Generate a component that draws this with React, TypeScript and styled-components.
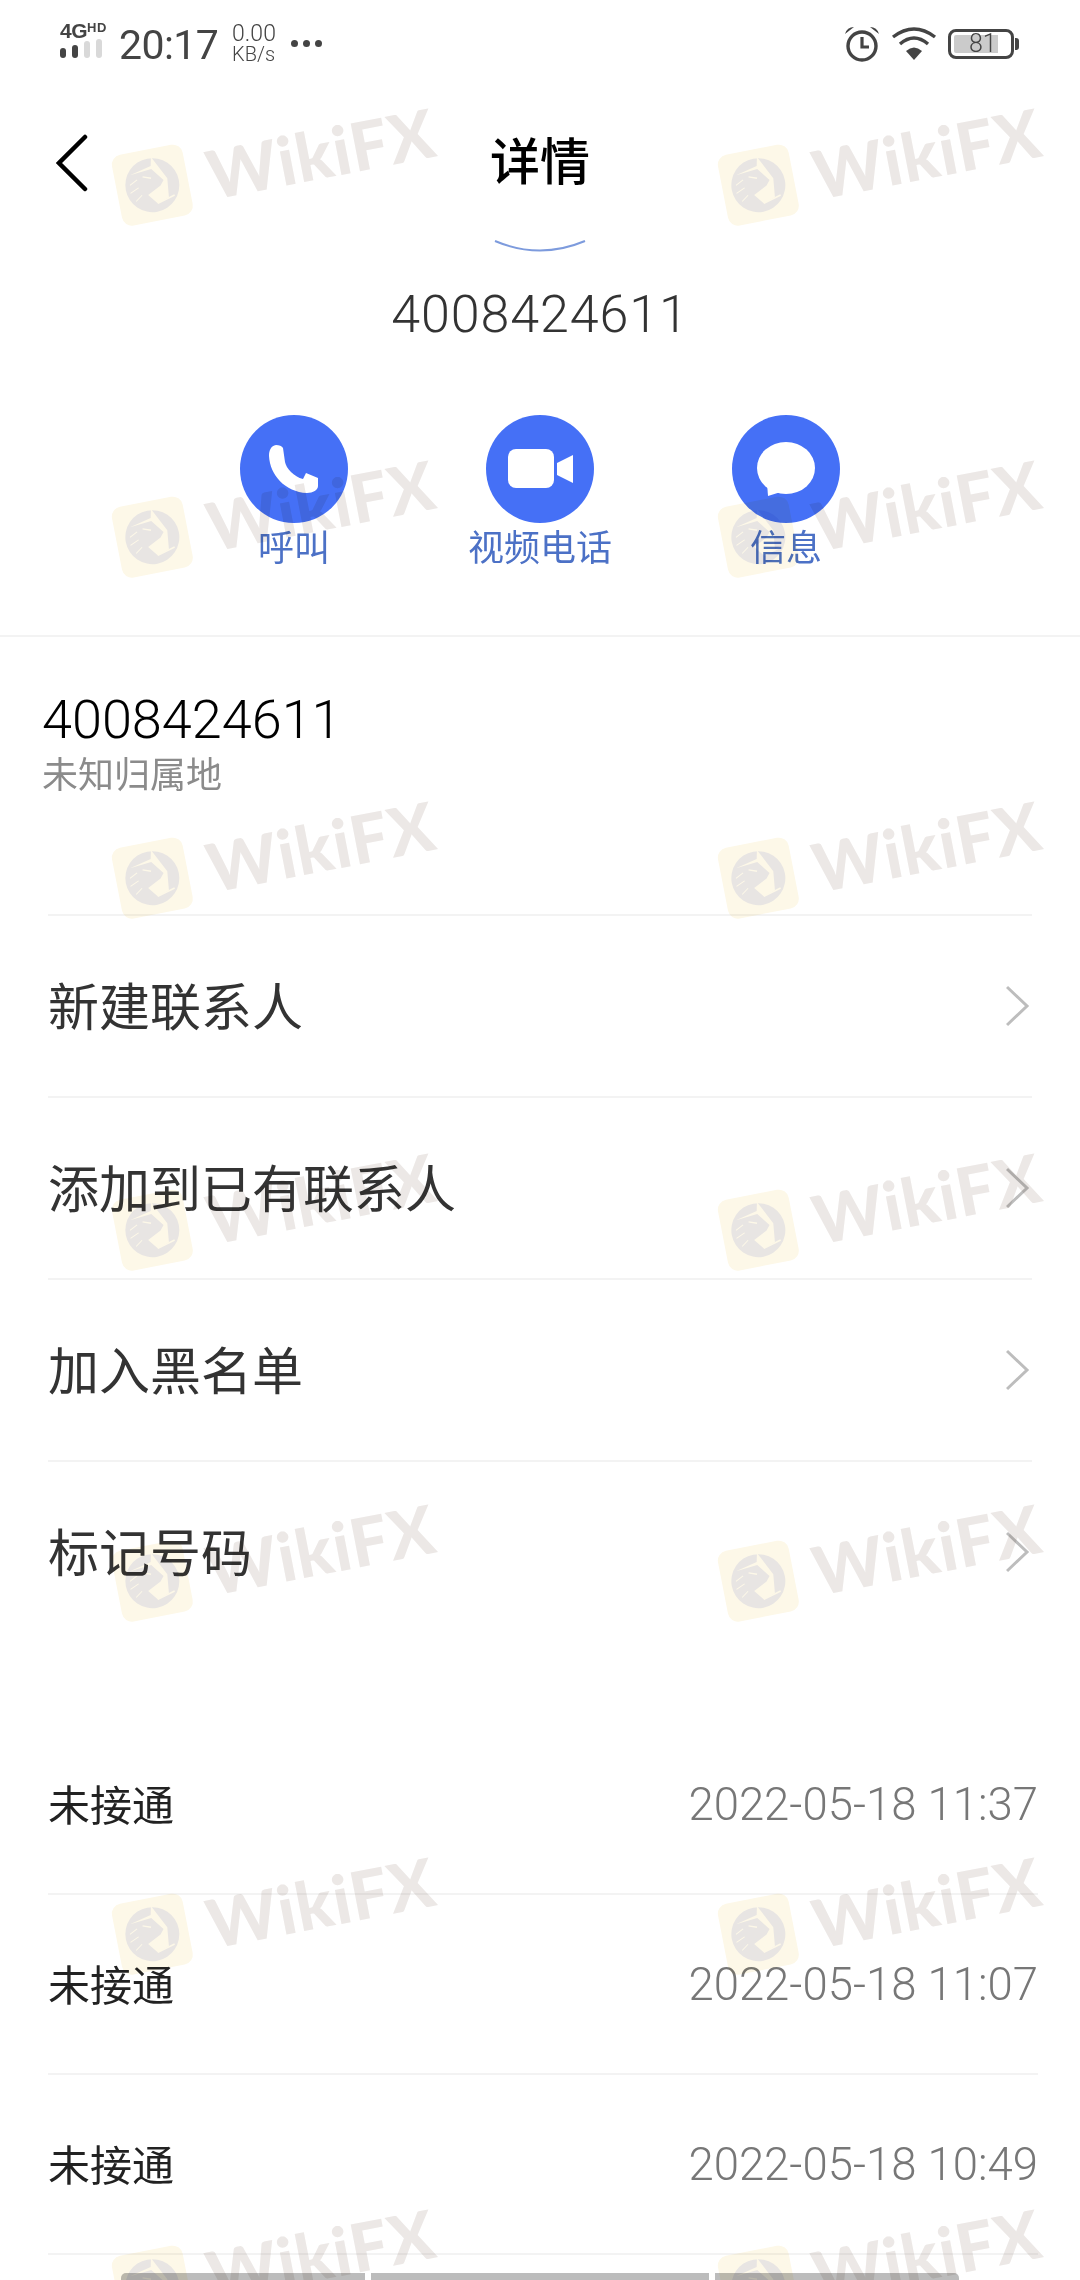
import React from "react";
import styled, { createGlobalStyle } from "styled-components";

const cjk = `"Noto Sans CJK SC", "Noto Sans", sans-serif`;
const latin = `Roboto, "Noto Sans CJK SC", sans-serif`;

const GlobalStyle = createGlobalStyle`
  html, body {
    margin: 0;
    padding: 0;
    background: #fff;
  }
`;

const Page = styled.div`
  position: relative;
  width: 1080px;
  height: 2280px;
  overflow: hidden;
  background: #fff;
  font-family: ${cjk};
  display: flex;
  flex-direction: column;
`;

const StatusBar = styled.div`
  height: 88px;
  padding: 23px 62px 0 60px;
  box-sizing: border-box;
  display: flex;
  justify-content: space-between;
  align-items: flex-start;
  color: #444;
`;

const StatusGroup = styled.div`
  display: flex;
  align-items: flex-start;
`;

const Network = styled.div`
  display: flex;
  flex-direction: column;
  width: 46px;
  margin-right: 13px;
`;

const NetworkLabel = styled.div`
  font: 700 21px/16px "Liberation Sans", sans-serif;
  letter-spacing: -0.5px;
  height: 15px;
  white-space: nowrap;
  display: flex;
  align-items: flex-start;
`;

const NetworkBadge = styled.span`
  font-size: 13px;
  line-height: 9px;
  letter-spacing: 0.6px;
`;

const SignalBars = styled.div`
  display: flex;
  gap: 6px;
  align-items: flex-end;
  height: 20px;
`;

const SignalBar = styled.span<{ $on?: boolean; $h: number }>`
  width: 6px;
  height: ${(p) => p.$h}px;
  border-radius: 3px;
  background: ${(p) => (p.$on ? "#444" : "#d9d9d9")};
`;

const Clock = styled.div`
  font: 400 41px/42px ${latin};
  letter-spacing: -0.6px;
  margin-top: 1px;
  margin-right: 14px;
  color: #444;
`;

const Speed = styled.div`
  display: flex;
  flex-direction: column;
  font-family: Roboto, sans-serif;
  font-weight: 300;
  margin-top: -1px;
  margin-right: 15px;
`;

const SpeedValue = styled.span`
  font-size: 23px;
  line-height: 23px;
`;

const SpeedUnit = styled.span`
  font-size: 20px;
  line-height: 19px;
`;

const Dots = styled.div`
  display: flex;
  gap: 5px;
  margin-top: 17px;
`;

const Dot = styled.span`
  width: 7px;
  height: 7px;
  border-radius: 50%;
  background: #444;
`;

const StatusIcons = styled.div`
  display: flex;
  align-items: center;
  gap: 11px;
  margin-top: 3px;
`;

const Battery = styled.div`
  position: relative;
  width: 66px;
  height: 30px;
  box-sizing: border-box;
  border: 3px solid #444;
  border-radius: 8px;
  padding: 3px;
  margin-right: 4px;
  &::after {
    content: "";
    position: absolute;
    right: -8px;
    top: 6px;
    width: 4px;
    height: 12px;
    background: #444;
    border-radius: 0 3px 3px 0;
  }
`;

const BatteryFill = styled.div`
  width: 81%;
  height: 100%;
  background: #cbcbcb;
  border-radius: 2px 0 0 2px;
  display: flex;
  align-items: center;
  justify-content: flex-end;
  padding-right: 1px;
  box-sizing: border-box;
  font: 300 25px/18px Roboto, sans-serif;
  color: #444;
`;

const NavBar = styled.div`
  height: 152px;
  position: relative;
  display: flex;
  align-items: center;
  justify-content: center;
  padding-bottom: 12px;
  box-sizing: border-box;
`;

const BackButton = styled.div`
  position: absolute;
  left: 56px;
  top: 46px;
  display: flex;
`;

const Title = styled.h1`
  margin: 0;
  font-size: 50px;
  font-weight: 500;
  line-height: 60px;
  color: #000;
`;

const Hero = styled.div`
  height: 396px;
  display: flex;
  flex-direction: column;
  align-items: center;
`;

const ArcIcon = styled.svg`
  display: block;
  margin-bottom: 32px;
`;

const HeroNumber = styled.div`
  font: 300 52px/60px ${latin};
  color: #333;
  letter-spacing: 0.9px;
  margin-bottom: 70px;
`;

const Actions = styled.div`
  display: flex;
  justify-content: center;
`;

const Action = styled.div`
  width: 246px;
  display: flex;
  flex-direction: column;
  align-items: center;
`;

const ActionCircle = styled.div`
  width: 108px;
  height: 108px;
  border-radius: 50%;
  background: #4570f6;
  display: flex;
`;

const ActionLabel = styled.span`
  margin-top: 1px;
  font-size: 36px;
  line-height: 42px;
  color: #4c71c6;
`;

const SectionRule = styled.div`
  height: 2px;
  background: #f3f3f3;
`;

const NumberBlock = styled.div`
  height: 277px;
  padding: 52px 48px 0 42px;
  box-sizing: border-box;
`;

const MainNumber = styled.div`
  font: 300 54px/62px ${latin};
  color: #000;
`;

const Place = styled.div`
  font-size: 36px;
  line-height: 42px;
  color: #8b8b8b;
`;

const MenuList = styled.div`
  margin: 0 48px;
  padding-bottom: 73px;
`;

const MenuRow = styled.div`
  height: 182px;
  box-sizing: border-box;
  border-top: 2px solid #f3f3f3;
  display: flex;
  align-items: center;
  justify-content: space-between;
  font-size: 51px;
  color: #333;
`;

const MenuLabel = styled.span`
  line-height: 60px;
  margin-top: -5px;
`;

const CallList = styled.div`
  margin: 0 42px 0 48px;
`;

const CallRow = styled.div`
  height: 180px;
  box-sizing: border-box;
  border-bottom: 2px solid #f3f3f3;
  display: flex;
  align-items: center;
  justify-content: space-between;
`;

const CallState = styled.span`
  font-size: 42px;
  line-height: 50px;
  margin-top: -2px;
  color: #222;
`;

const CallTime = styled.span`
  font: 300 45.5px/52px Roboto, sans-serif;
  margin-top: 2px;
  color: #777;
`;

const NavHandle = styled.div`
  margin-top: 18px;
  display: flex;
  justify-content: center;
  gap: 6px;
`;

const HandleBar = styled.span<{ $w: number }>`
  width: ${(p) => p.$w}px;
  height: 7px;
  background: #bcbcbc;
  &:first-child {
    border-top-left-radius: 5px;
  }
  &:last-child {
    border-top-right-radius: 5px;
  }
`;

const Watermark = styled.div<{ $x: number; $y: number }>`
  position: absolute;
  left: ${(p) => p.$x}px;
  top: ${(p) => p.$y}px;
  display: flex;
  align-items: center;
  gap: 20px;
  transform: rotate(-11deg);
  transform-origin: left center;
  mix-blend-mode: multiply;
  pointer-events: none;
`;

const WatermarkBadge = styled.div`
  width: 72px;
  height: 72px;
  border-radius: 10px;
  background: #fdf8e8;
  display: flex;
  align-items: center;
  justify-content: center;
`;

const WatermarkText = styled.span`
  font: 900 67px/72px Lato, sans-serif;
  color: #ece8e6;
  letter-spacing: 1px;
`;

const markTops = [156, 508, 849, 1201, 1552, 1905, 2257];
const markLefts = [117, 723];

const menuItems = ["新建联系人", "添加到已有联系人", "加入黑名单", "标记号码"];

const calls = ["2022-05-18 11:37", "2022-05-18 11:07", "2022-05-18 10:49"];

function Chevron() {
  return (
    <svg width="26" height="44" viewBox="0 0 26 44">
      <path d="M1 3 L21 22 L1 41" fill="none" stroke="#bdbdbd" strokeWidth="3" />
    </svg>
  );
}

function EagleMark() {
  return (
    <svg width="56" height="56" viewBox="0 0 56 56">
      <circle cx="28" cy="28" r="27" fill="#e8e5e3" />
      {/* gaps between the shutter blades */}
      <path d="M32 0 L44 24 L42 43 L30 47 L22 37 L36 30 L40 25 L30 12 L8 14 L30 9 Z" fill="#fdf8e8" />
      <path d="M30 47 L48 42" fill="none" stroke="#fdf8e8" strokeWidth="1.6" />
      <path d="M20 18 L28 21" fill="none" stroke="#fdf8e8" strokeWidth="1.4" />
      <path d="M14 20 L6 24 M14 28 L5 32 M16 36 L9 41" fill="none" stroke="#fdf8e8" strokeWidth="1" />
    </svg>
  );
}

export default function App() {
  return (
    <Page>
      <GlobalStyle />
      <StatusBar>
        <StatusGroup>
          <Network>
            <NetworkLabel>
              4G<NetworkBadge>HD</NetworkBadge>
            </NetworkLabel>
            <SignalBars>
              <SignalBar $on $h={10} />
              <SignalBar $on $h={13} />
              <SignalBar $h={17} />
              <SignalBar $h={19} />
            </SignalBars>
          </Network>
          <Clock>20:17</Clock>
          <Speed>
            <SpeedValue>0.00</SpeedValue>
            <SpeedUnit>KB/s</SpeedUnit>
          </Speed>
          <Dots>
            <Dot />
            <Dot />
            <Dot />
          </Dots>
        </StatusGroup>
        <StatusIcons>
          <svg width="36" height="36" viewBox="0 0 36 36">
            <circle cx="18" cy="20" r="14" fill="none" stroke="#444" strokeWidth="3.4" />
            <path d="M18 11 V21 H25" fill="none" stroke="#444" strokeWidth="3.2" />
            <path d="M1 8 Q3 1 10 1 Z M35 8 Q33 1 26 1 Z" fill="#444" />
          </svg>
          <svg width="46" height="36" viewBox="0 0 46 36">
            <path d="M2 11 Q23 -5 44 11" fill="none" stroke="#444" strokeWidth="3.4" />
            <path d="M9 18 Q23 6 37 18" fill="none" stroke="#444" strokeWidth="3.4" />
            <path d="M15 25 Q23 18 31 25 L23 34 Z" fill="#444" />
          </svg>
          <Battery>
            <BatteryFill>81</BatteryFill>
          </Battery>
        </StatusIcons>
      </StatusBar>

      <NavBar>
        <BackButton>
          <svg width="32" height="58" viewBox="0 0 32 58">
            <path d="M29 3 L3 29 L29 55" fill="none" stroke="#000" strokeWidth="4.5" strokeLinecap="round" />
          </svg>
        </BackButton>
        <Title>详情</Title>
      </NavBar>

      <Hero>
        <ArcIcon width="92" height="13" viewBox="0 0 92 13">
          <path d="M1 1 Q46 20 91 1" fill="none" stroke="#7d9bdd" strokeWidth="2" />
        </ArcIcon>
        <HeroNumber>4008424611</HeroNumber>
        <Actions>
          <Action>
            <ActionCircle>
              <svg width="108" height="108" viewBox="0 0 108 108">
                <path
                  d="M36 30 C31 31 29 35 29 41 C30 60 45 77 67 78 C73 78 78 75 78 71 L78 63 L66 58 L63 64 C54 62 46 53 45 47 L43 33 C42 31 39 30 36 30 Z"
                  fill="#fff"
                />
              </svg>
            </ActionCircle>
            <ActionLabel>呼叫</ActionLabel>
          </Action>
          <Action>
            <ActionCircle>
              <svg width="108" height="108" viewBox="0 0 108 108">
                <rect x="22" y="34" width="46" height="39" rx="8" fill="#fff" />
                <path d="M71 48 L87 40 V68 L71 60 Z" fill="#fff" />
              </svg>
            </ActionCircle>
            <ActionLabel>视频电话</ActionLabel>
          </Action>
          <Action>
            <ActionCircle>
              <svg width="108" height="108" viewBox="0 0 108 108">
                <ellipse cx="54" cy="53" rx="29" ry="26" fill="#fff" />
                <path d="M35 68 L36 81 L52 76 Z" fill="#fff" />
              </svg>
            </ActionCircle>
            <ActionLabel>信息</ActionLabel>
          </Action>
        </Actions>
      </Hero>

      <SectionRule />

      <NumberBlock>
        <MainNumber>4008424611</MainNumber>
        <Place>未知归属地</Place>
      </NumberBlock>

      <MenuList>
        {menuItems.map((item) => (
          <MenuRow key={item}>
            <MenuLabel>{item}</MenuLabel>
            <Chevron />
          </MenuRow>
        ))}
      </MenuList>

      <CallList>
        {calls.map((time) => (
          <CallRow key={time}>
            <CallState>未接通</CallState>
            <CallTime>{time}</CallTime>
          </CallRow>
        ))}
      </CallList>

      <NavHandle>
        <HandleBar $w={244} />
        <HandleBar $w={338} />
        <HandleBar $w={244} />
      </NavHandle>

      {markTops.map((top) =>
        markLefts.map((left) => (
          <Watermark key={`${left}-${top}`} $x={left} $y={top}>
            <WatermarkBadge>
              <EagleMark />
            </WatermarkBadge>
            <WatermarkText>WikiFX</WatermarkText>
          </Watermark>
        ))
      )}
    </Page>
  );
}
